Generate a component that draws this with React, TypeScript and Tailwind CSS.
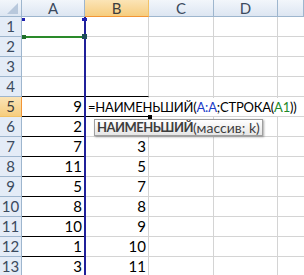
import React from 'react';

const rows: { a: string; b: string }[] = [
  { a: '', b: '' },
  { a: '', b: '' },
  { a: '', b: '' },
  { a: '', b: '' },
  { a: '9', b: '' },
  { a: '2', b: '' },
  { a: '7', b: '3' },
  { a: '11', b: '5' },
  { a: '5', b: '7' },
  { a: '8', b: '8' },
  { a: '10', b: '9' },
  { a: '1', b: '10' },
  { a: '3', b: '11' },
];

const cols = ['A', 'B', 'C', 'D', ''];

export default function App() {
  return (
    <div className="relative w-[304px] h-[275px] overflow-hidden bg-white font-['Lato','Open_Sans',sans-serif] text-[15px] text-black">
      <div className="grid grid-cols-[22px_63px_64px_65px_64px_1fr]">
        {/* Corner */}
        <div className="relative h-[17px] border-r border-b border-[#9eb6ce] bg-gradient-to-b from-[#f2f6fb] to-[#dde6f2]">
          <div className="absolute right-[3px] bottom-[2px] w-0 h-0 border-l-[11px] border-l-transparent border-b-[11px] border-b-[#b8c8dc]" />
        </div>
        {cols.map((c, i) =>
          c === 'B' ? (
            <div
              key={i}
              className="h-[17px] flex items-center justify-center border-r border-b border-r-[#f2c266] border-b-[#f29536] bg-gradient-to-b from-[#fbe4b6] to-[#f6cd7e] text-[#3d3d3d] leading-none"
            >
              {c}
            </div>
          ) : (
            <div
              key={i}
              className="h-[17px] flex items-center justify-center border-r border-b border-[#9eb6ce] bg-gradient-to-b from-[#f2f6fb] to-[#dde6f2] text-[#3b4a5e] leading-none"
            >
              {c}
            </div>
          )
        )}

        {rows.map((r, i) => {
          const n = i + 1;
          const active = n === 5;
          const blackA = n >= 4;
          return (
            <React.Fragment key={n}>
              <div
                className={
                  active
                    ? 'h-[20px] flex items-center justify-center border-r border-b border-r-[#f29536] border-b-[#f2c266] bg-gradient-to-b from-[#fbe4b6] to-[#f6cd7e] text-[#3d3d3d] leading-none'
                    : 'h-[20px] flex items-center justify-center border-r border-b border-[#9eb6ce] bg-[#e4ecf7] text-[#3b4a5e] leading-none'
                }
              >
                {n}
              </div>
              <div
                className={
                  'h-[20px] flex items-center justify-end pr-[2px] border-r border-b leading-none ' +
                  (blackA ? 'border-r-[#d4d4d4] border-b-black' : 'border-[#d4d4d4]')
                }
              >
                {r.a}
              </div>
              <div
                className={
                  'h-[20px] flex items-center justify-end pr-[2px] border-r leading-none ' +
                  (n === 4 ? 'border-b border-r-[#d4d4d4] border-b-black' : n === 5 ? 'border-b-2 border-r-[#d4d4d4] border-b-black' : 'border-b border-[#d4d4d4]')
                }
              >
                {r.b}
              </div>
              <div className="h-[20px] border-r border-b border-[#d4d4d4]" />
              <div className="h-[20px] border-r border-b border-[#d4d4d4]" />
              <div className="h-[20px] border-b border-[#d4d4d4]" />
            </React.Fragment>
          );
        })}
      </div>

      {/* Formula being edited in B5 */}
      <div className="absolute left-[86px] top-[98px] h-[18px] pl-[2px] pr-[2px] flex items-center bg-white whitespace-nowrap leading-none text-[13px] tracking-[-0.2px]">
        <span>=НАИМЕНЬШИЙ(</span>
        <span className="text-[#1a3cc8]">A:A</span>
        <span>;СТРОКА(</span>
        <span className="text-[#1f8a2a]">A1</span>
        <span>))</span>
      </div>

      {/* Range highlight A:A (blue) */}
      <div className="absolute left-[84px] top-[17px] w-[2px] h-[260px] bg-[#20209a]" />
      <div className="absolute left-[22px] top-[18px] w-[3px] h-[3px] bg-[#2020b0]" />
      <div className="absolute left-[82px] top-[18px] w-[5px] h-[3px] bg-[#2020b0]" />

      {/* Range highlight A1 (green) */}
      <div className="absolute left-[22px] top-[36px] w-[63px] h-[2px] bg-[#2a8a2a]" />
      <div className="absolute left-[22px] top-[35px] w-[4px] h-[4px] bg-[#1f6e2a]" />
      <div className="absolute left-[82px] top-[34px] w-[5px] h-[5px] bg-[#1f4e5a]" />

      {/* Fill handle */}
      <div className="absolute left-[148px] top-[115px] w-[4px] h-[4px] bg-black" />

      {/* Function tooltip */}
      <div className="absolute left-[94px] top-[119px] h-[17px] px-[2px] flex items-center whitespace-nowrap border border-[#a0a0a0] bg-gradient-to-b from-[#ffffff] to-[#e6e6e6] shadow-[1px_1px_2px_rgba(0,0,0,0.35)] text-[#3e3e3e] leading-none">
        <span className="font-bold text-[13px] tracking-[-0.5px]">НАИМЕНЬШИЙ</span>
        <span className="text-[14px]">(массив; k)</span>
      </div>
    </div>
  );
}
